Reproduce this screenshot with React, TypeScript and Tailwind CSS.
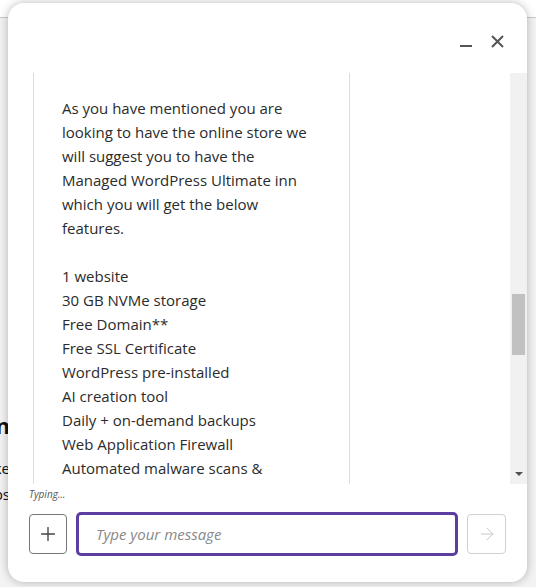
import { Plus, ArrowRight } from 'lucide-react'

const intro = [
  'As you have mentioned you are',
  'looking to have the online store we',
  'will suggest you to have the',
  'Managed WordPress Ultimate inn',
  'which you will get the below',
  'features.',
]

const features = [
  '1 website',
  '30 GB NVMe storage',
  'Free Domain**',
  'Free SSL Certificate',
  'WordPress pre-installed',
  'AI creation tool',
  'Daily + on-demand backups',
  'Web Application Firewall',
  'Automated malware scans &',
  'removal',
  'Unlimited bandwidth',
]

export default function App() {
  return (
    <div className="relative h-[587px] w-[536px] overflow-hidden bg-[#f3f3f3] font-['Open_Sans',sans-serif] text-[#111]">
      {/* page behind the chat window */}
      <div className="h-[18px] border-b border-[#c9c9c9] bg-white" />
      <div className="-ml-[60px] flex w-[70px] flex-col items-end pt-[395px] text-right">
        <p className="text-[22px] font-bold leading-[24px]">Solution</p>
        <p className="mt-[21px] text-[15px] leading-[20px]">make</p>
        <p className="mt-[6px] text-[15px] leading-[20px]">ups</p>
      </div>

      {/* chat window */}
      <div className="absolute left-[8px] top-[3px] flex h-[579px] w-[519px] flex-col rounded-[16px] bg-white shadow-[0_0_10px_rgba(0,0,0,0.28)]">
        <div className="flex h-[70px] items-start justify-end gap-[17px] pr-[23px] pt-[29px]">
          <button className="flex h-[18px] w-[14px] items-end justify-center pb-[3px]">
            <span className="block h-[2px] w-[12px] bg-[#555]" />
          </button>
          <button className="flex h-[18px] w-[14px] items-center justify-center">
            <svg width="13" height="13" viewBox="0 0 13 13" fill="none" stroke="#555" strokeWidth="2">
              <path d="M1 1l11 11M12 1L1 12" />
            </svg>
          </button>
        </div>

        <div className="flex h-[411px]">
          <div className="flex-1 overflow-hidden pl-[25px]">
            <div className="w-[317px] border-x border-[#d9dde3] pl-[28px] pt-[23px] text-[15px] leading-[24px] text-[#2b2b2b]">
              {intro.map((line) => (
                <p key={line}>{line}</p>
              ))}
              <p>&nbsp;</p>
              {features.map((line) => (
                <p key={line}>{line}</p>
              ))}
            </div>
          </div>
          {/* scrollbar */}
          <div className="flex w-[17px] flex-col bg-[#f1f1f1]">
            <div className="h-[221px]" />
            <div className="mx-[2px] h-[61px] bg-[#c1c1c1]" />
            <div className="flex-1" />
            <div className="flex h-[12px] items-start justify-center">
              <span className="block h-0 w-0 border-x-[4px] border-t-[4px] border-x-transparent border-t-[#505050]" />
            </div>
          </div>
        </div>

        <p className="pl-[21px] pt-[3px] text-[10px] italic leading-[14px] text-[#555]">Typing...</p>

        <div className="mt-[11px] flex items-center gap-[9px] px-[21px]">
          <button className="flex h-[40px] w-[38px] items-center justify-center rounded-[4px] border border-[#777]">
            <Plus size={22} strokeWidth={1.5} color="#444" />
          </button>
          <div className="flex h-[44px] w-[383px] items-center rounded-[5px] border-[3px] border-[#5b3ea0] pl-[17px]">
            <span className="text-[15px] italic text-[#888]">Type your message</span>
          </div>
          <button className="flex h-[40px] w-[39px] items-center justify-center rounded-[4px] border border-[#d0d0d0]">
            <ArrowRight size={20} strokeWidth={1.2} color="#c8c8c8" />
          </button>
        </div>
      </div>
    </div>
  )
}
